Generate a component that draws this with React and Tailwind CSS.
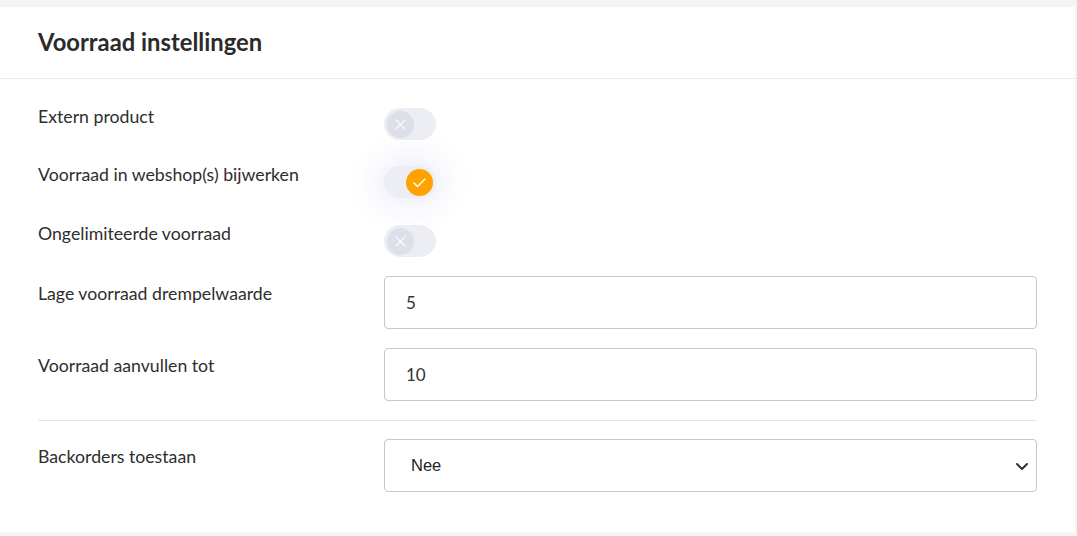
import React, { useState } from 'react';

function Toggle({ checked, onChange, glow }) {
  return (
    <button
      type="button"
      onClick={onChange}
      className={`relative h-[32px] w-[52px] shrink-0 rounded-full bg-[#eceef3] ${
        glow ? 'shadow-[0_0_28px_10px_rgba(110,110,230,0.11)]' : ''
      }`}
    >
      {checked ? (
        <span className="absolute right-[3px] top-[2.5px] flex h-[27px] w-[27px] items-center justify-center rounded-full bg-[#ffa200]">
          <svg width="19" height="19" viewBox="0 0 24 24" fill="none" stroke="white" strokeWidth="1.8" strokeLinecap="round" strokeLinejoin="round">
            <path d="M5 12.5l4.5 4.5L19 7.5" />
          </svg>
        </span>
      ) : (
        <span className="absolute left-[3px] top-[2.5px] flex h-[27px] w-[27px] items-center justify-center rounded-full bg-[#dde0e8]">
          <svg width="15" height="15" viewBox="0 0 24 24" fill="none" stroke="white" strokeWidth="1.8" strokeLinecap="round">
            <path d="M5 5l14 14M19 5L5 19" />
          </svg>
        </span>
      )}
    </button>
  );
}

export default function App() {
  const [toggles, setToggles] = useState({ extern: false, sync: true, unlimited: false });
  const [low, setLow] = useState('5');
  const [refill, setRefill] = useState('10');
  const [backorders, setBackorders] = useState('nee');

  const flip = (key) => setToggles({ ...toggles, [key]: !toggles[key] });

  const toggleRows = [
    { key: 'extern', label: 'Extern product', mb: 'mb-[26px]' },
    { key: 'sync', label: 'Voorraad in webshop(s) bijwerken', mb: 'mb-[27px]' },
    { key: 'unlimited', label: 'Ongelimiteerde voorraad', mb: 'mb-[19px]' },
  ];

  return (
    <div className="min-h-[536px] bg-[#f4f4f4] pt-[7px] pb-[4px] pr-[2px]" style={{ fontFamily: 'Lato, "Noto Sans", sans-serif' }}>
      <div className="bg-white">
        {/* Header */}
        <div className="flex h-[72px] items-center border-b border-[#e8e8ee] px-[38px]">
          <h2 className="text-[23.8px] font-bold text-[#2b2b2b]">Voorraad instellingen</h2>
        </div>

        <div className="px-[38px] pt-[29px] pb-[40px] text-[17.7px] text-[#2e2e2e]">
          {/* Toggle rows */}
          {toggleRows.map((row) => (
            <div key={row.key} className={`flex items-start ${row.mb}`}>
              <label className="w-[346px] leading-[18px]">{row.label}</label>
              <Toggle checked={toggles[row.key]} onChange={() => flip(row.key)} glow={row.key === 'sync'} />
            </div>
          ))}

          {/* Number inputs */}
          <div className="mb-[19px] flex items-start">
            <label className="w-[346px] pt-[9px] leading-[18px]">Lage voorraad drempelwaarde</label>
            <input
              type="text"
              value={low}
              onChange={(e) => setLow(e.target.value)}
              className="h-[53px] flex-1 rounded-[4px] border border-[#c8c8c8] px-[21px] text-[17px] text-[#333] outline-none"
            />
          </div>
          <div className="flex items-start border-b border-[#e6e6e6] pb-[19px]">
            <label className="w-[346px] pt-[9px] leading-[18px]">Voorraad aanvullen tot</label>
            <input
              type="text"
              value={refill}
              onChange={(e) => setRefill(e.target.value)}
              className="h-[53px] flex-1 rounded-[4px] border border-[#c8c8c8] px-[21px] text-[17px] text-[#333] outline-none"
            />
          </div>

          {/* Select */}
          <div className="mt-[18px] flex items-start">
            <label className="w-[346px] pt-[9px] leading-[18px]">Backorders toestaan</label>
            <div className="relative flex-1">
              <select
                value={backorders}
                onChange={(e) => setBackorders(e.target.value)}
                className="h-[53px] w-full appearance-none rounded-[4px] border border-[#c8c8c8] bg-white px-[26px] text-[16.5px] text-[#222] outline-none"
                style={{ fontFamily: '"Liberation Sans", Arial, sans-serif' }}
              >
                <option value="nee">Nee</option>
                <option value="ja">Ja</option>
                <option value="notify">Ja, met melding</option>
              </select>
              <svg className="pointer-events-none absolute right-[8px] top-[23px]" width="14" height="9" viewBox="0 0 14 9" fill="none" stroke="#333" strokeWidth="2" strokeLinecap="round" strokeLinejoin="round">
                <path d="M2 2l5 5 5-5" />
              </svg>
            </div>
          </div>
        </div>
      </div>
    </div>
  );
}
